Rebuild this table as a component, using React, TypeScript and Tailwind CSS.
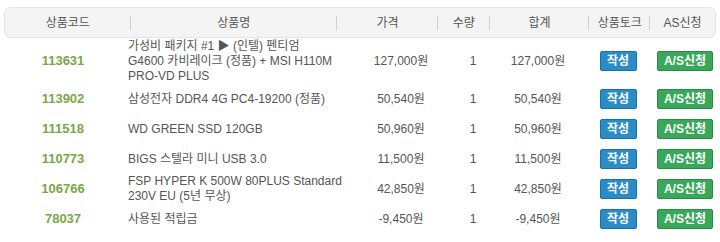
import React from 'react';

type Item = {
  code: string;
  name: string[];
  price: string;
  qty: number;
  total: string;
  h: string;
};

const items: Item[] = [
  {
    code: '113631',
    name: ['가성비 패키지 #1 ▶ (인텔) 펜티엄', 'G4600 카비레이크 (정품) + MSI H110M', 'PRO-VD PLUS'],
    price: '127,000원',
    qty: 1,
    total: '127,000원',
    h: 'h-[46px]',
  },
  { code: '113902', name: ['삼성전자 DDR4 4G PC4-19200 (정품)'], price: '50,540원', qty: 1, total: '50,540원', h: 'h-[30px]' },
  { code: '111518', name: ['WD GREEN SSD 120GB'], price: '50,960원', qty: 1, total: '50,960원', h: 'h-[30px]' },
  { code: '110773', name: ['BIGS 스텔라 미니 USB 3.0'], price: '11,500원', qty: 1, total: '11,500원', h: 'h-[30px]' },
  {
    code: '106766',
    name: ['FSP HYPER K 500W 80PLUS Standard', '230V EU (5년 무상)'],
    price: '42,850원',
    qty: 1,
    total: '42,850원',
    h: 'h-[30px]',
  },
  { code: '78037', name: ['사용된 적립금'], price: '-9,450원', qty: 1, total: '-9,450원', h: 'h-[30px]' },
];

const headers = [
  { label: '상품코드', w: 'w-[126px]' },
  { label: '상품명', w: 'w-[207px]' },
  { label: '가격', w: 'w-[101px]' },
  { label: '수량', w: 'w-[52px]' },
  { label: '합계', w: 'w-[100px]' },
  { label: '상품토크', w: 'w-[61px]' },
  { label: 'AS신청', w: 'w-[65px]' },
];

export default function App() {
  return (
    <div
      className="w-[720px] h-[242px] bg-white px-[4px] pt-[7px] text-[12px] text-[#555]"
      style={{ fontFamily: '"Liberation Sans", "Noto Sans CJK KR", sans-serif' }}
    >
      {/* header bar */}
      <div className="flex h-[31px] items-center rounded-[6px] border border-[#e4e4e4] bg-[#f4f4f4]">
        {headers.map((h, i) => (
          <div key={h.label} className={`relative flex h-full items-center justify-center ${h.w}`}>
            {h.label}
            {i < headers.length - 1 && (
              <span className="absolute right-0 top-[8px] h-[14px] w-px bg-[#cfcfcf]" />
            )}
          </div>
        ))}
      </div>

      {/* rows */}
      <div className="flex flex-col">
        {items.map((it) => (
          <div key={it.code} className={`flex items-center ${it.h}`}>
            <div className="w-[118px] text-center text-[13px] font-bold text-[#78a847]">{it.code}</div>
            <div className="w-[228px] pl-[6px] leading-[15px] whitespace-nowrap">
              {it.name.map((line) => (
                <div key={line}>{line}</div>
              ))}
            </div>
            <div className="w-[102px] text-center">{it.price}</div>
            <div className="w-[42px] text-center">{it.qty}</div>
            <div className="w-[88px] text-center">{it.total}</div>
            <div className="flex w-[72px] justify-center">
              <button className="h-[20px] w-[37px] rounded-[2px] border border-[#1d6f9f] bg-[#2a8dc5] text-[12px] font-bold leading-[18px] text-white">
                작성
              </button>
            </div>
            <div className="flex w-[62px] justify-center">
              <button className="h-[20px] w-[56px] rounded-[2px] border border-[#288a45] bg-[#3aa85b] text-[12px] font-bold leading-[18px] text-white">
                A/S신청
              </button>
            </div>
          </div>
        ))}
      </div>
    </div>
  );
}
